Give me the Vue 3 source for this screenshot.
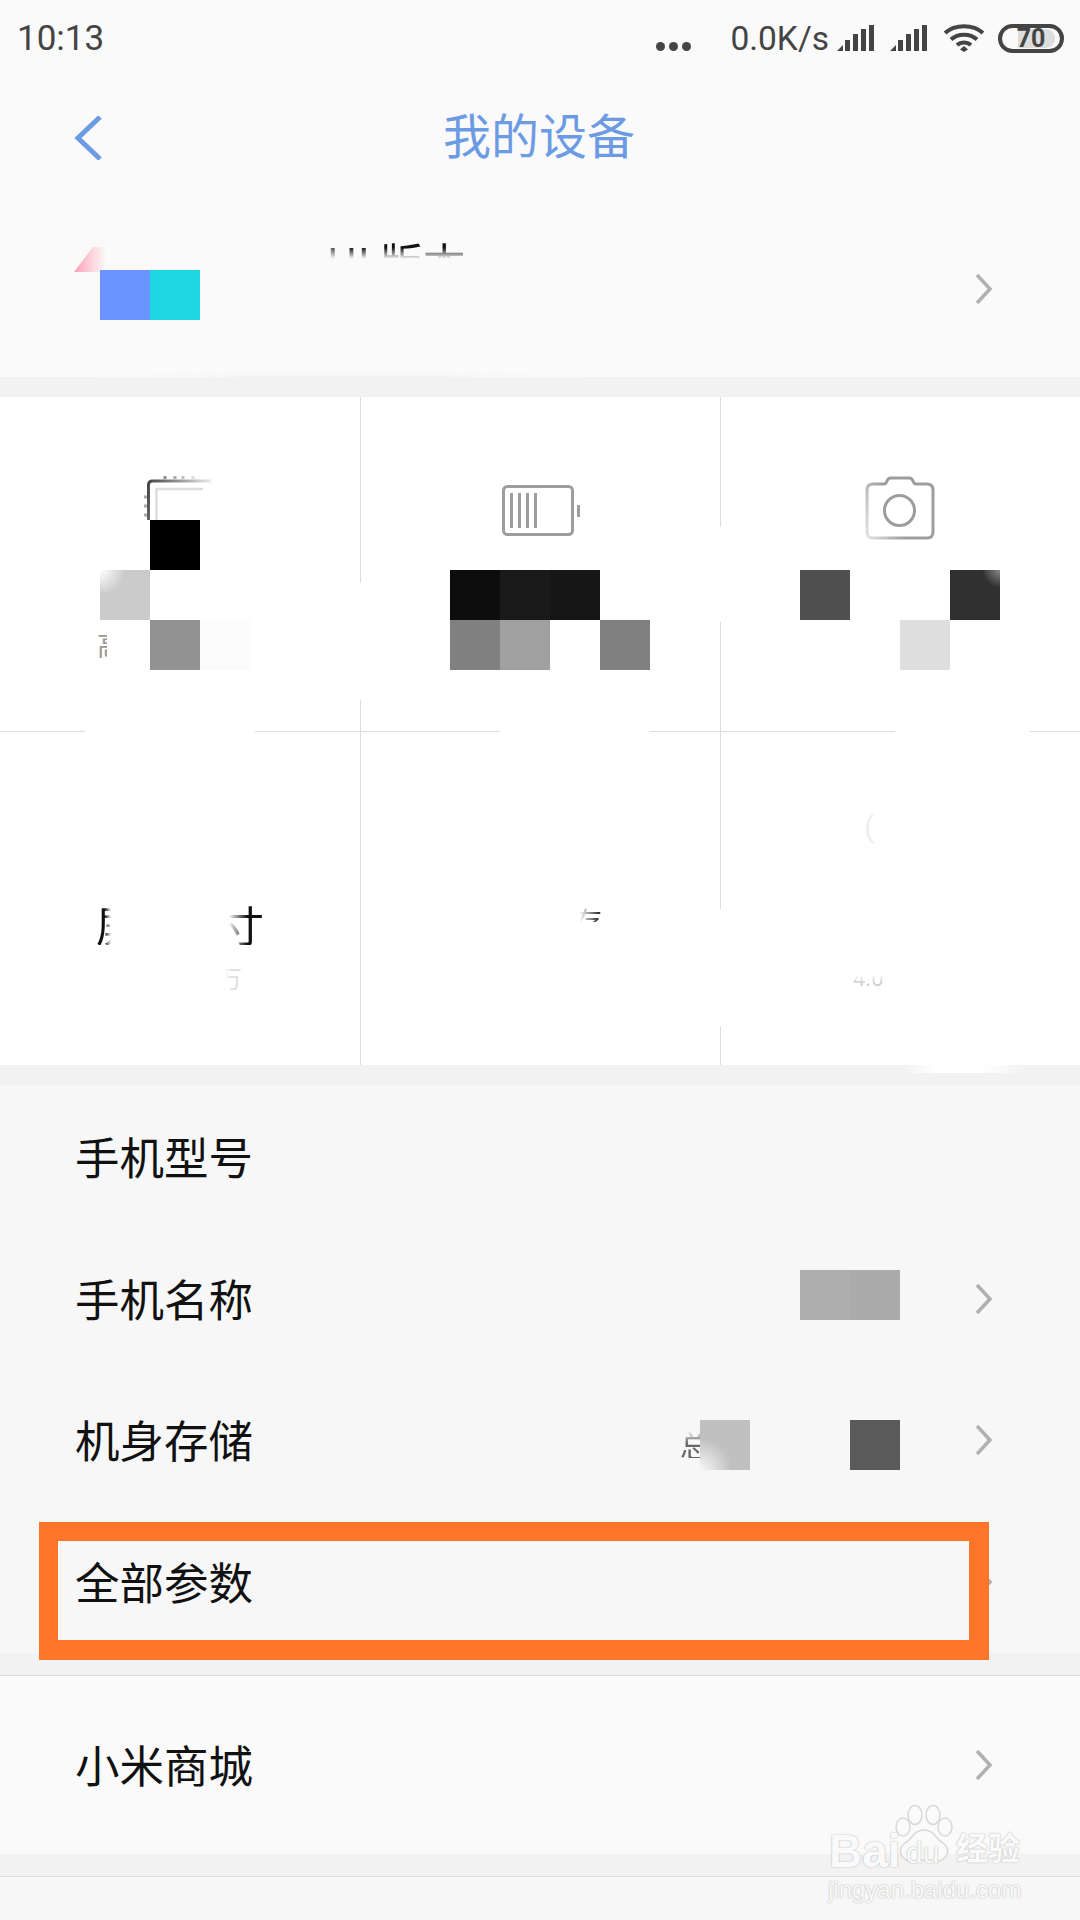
<template>
  <div class="page">
    <section class="top">
      <div class="status">
        <span class="clock">10:13</span>
        <div class="status-right">
          <div class="dots"><i></i><i></i><i></i></div>
          <span class="speed">0.0K/s</span>
          <svg v-for="n in 2" :key="n" class="signal" viewBox="0 0 38 26">
            <path d="M0 26 L6 20 V26 Z" />
            <rect x="8" y="15" width="5" height="11" />
            <rect x="16" y="9" width="5" height="17" />
            <rect x="24" y="4" width="5" height="22" />
            <rect x="32" y="0" width="5" height="26" />
          </svg>
          <svg class="wifi" viewBox="0 0 42 28" fill="none" stroke="#444" stroke-width="4">
            <path d="M2 9 C12 0 30 0 40 9" />
            <path d="M8 15.500 C15 9 27 9 34 15.500" />
            <path d="M14 21 C18 17.500 24 17.500 28 21" />
            <path d="M21 22 L25 25.500 L21 28 L17 25.500 Z" fill="#444" stroke="none" />
          </svg>
          <div class="battery"><div class="battery-fill"></div><b>70</b></div>
        </div>
      </div>
      <div class="nav">
        <svg class="back" viewBox="0 0 28 44" fill="none" stroke="#6d9be3" stroke-width="5">
          <path d="M26 1 L4 22 L26 43" />
        </svg>
        <h1>我的设备</h1>
      </div>
      <div class="version">
        <div class="version-logo"></div>
        <span class="version-name">IUI 版本</span>
        <svg class="chevron" viewBox="0 0 18 30"><path d="M2 1 L15 15 L2 29" /></svg>
      </div>
    </section>
    <div class="band"></div>

    <section class="grid">
      <div v-for="cell in cells" :key="cell.id" class="cell">
        <svg v-if="cell.id === 'cpu'" class="ic-cpu" viewBox="0 0 70 46" fill="none">
          <defs>
            <linearGradient id="cpuFade" gradientUnits="userSpaceOnUse" x1="4" y1="10" x2="68" y2="30">
              <stop offset="0" stop-color="#444" />
              <stop offset="1" stop-color="#fff" />
            </linearGradient>
            <linearGradient id="cpuTicks" gradientUnits="userSpaceOnUse" x1="20" y1="0" x2="56" y2="0">
              <stop offset="0" stop-color="#888" />
              <stop offset="1" stop-color="#eee" />
            </linearGradient>
          </defs>
          <path d="M5.500 46 V11 Q5.500 7 9.500 7 H68" stroke="url(#cpuFade)" stroke-width="3" />
          <path d="M13.500 46 V15 H60" stroke="#ddd" stroke-width="2.500" />
          <path d="M1 23 H4 M1 32 H4 M1 41 H4" stroke="#aaa" stroke-width="3" />
          <path d="M22 2 V5 M32 2 V5 M40 2 V5 M50 2 V5" stroke="url(#cpuTicks)" stroke-width="3" />
        </svg>
        <svg v-if="cell.id === 'battery'" class="ic-battery" viewBox="0 0 78 52" fill="none" stroke="#9d9d9d">
          <rect x="1.500" y="1.500" width="69" height="48" rx="4" stroke-width="3" />
          <path d="M76.500 20 V32" stroke-width="3" />
          <path d="M9.500 8 V43 M17.500 8 V43 M25.500 8 V43 M33.500 8 V43" stroke-width="3" />
        </svg>
        <svg v-if="cell.id === 'camera'" class="ic-camera" viewBox="0 0 70 64" fill="none" stroke="url(#camFade)" stroke-width="3">
          <defs>
            <linearGradient id="camFade" x1="0" y1="1" x2="0.5" y2="0.8">
              <stop offset="0" stop-color="#e4e4e4" />
              <stop offset="1" stop-color="#9d9d9d" />
            </linearGradient>
          </defs>
          <path d="M8 8 H19 Q21 8 22 5 Q23 2 26 2 H44 Q47 2 48 5 Q49 8 51 8 H62 Q68 8 68 14 V56 Q68 62 62 62 H8 Q2 62 2 56 V14 Q2 8 8 8 Z" />
          <circle cx="34.500" cy="34.500" r="15" stroke="#9d9d9d" />
        </svg>
      </div>
    </section>
    <div class="band"></div>

    <section class="specs">
      <div v-for="row in specRows" :key="row.label" class="row">
        <span>{{ row.label }}</span>
        <svg v-if="row.arrow" class="chevron" viewBox="0 0 18 30"><path d="M2 1 L15 15 L2 29" /></svg>
      </div>
    </section>
    <div class="band band-line"></div>

    <section class="shop">
      <div class="row">
        <span>小米商城</span>
        <svg class="chevron" viewBox="0 0 18 30"><path d="M2 1 L15 15 L2 29" /></svg>
      </div>
    </section>
    <div class="band band-line"></div>

    <!-- mosaic blocks sit over the page on a 50px raster -->
    <div
      v-for="(b, i) in blocks"
      :key="i"
      class="block"
      :style="{ left: b[0] + 'px', top: b[1] + 'px', background: b[2] }"
    ></div>

    <!-- smeared parts of the divider lines -->
    <div
      v-for="(e, i) in erased"
      :key="'e' + i"
      class="erase"
      :style="{ left: e[0] + 'px', top: e[1] + 'px', width: e[2] + 'px', height: e[3] + 'px' }"
    ></div>

    <div class="stripe"></div>
    <div class="stripe-low"></div>
    <div class="frag frag-size">屏幕尺寸</div>
    <div class="frag frag-gao">高</div>
    <div class="frag frag-wan">万</div>
    <div class="frag frag-mid">存</div>
    <div class="frag frag-paren">(</div>
    <div class="frag frag-num">4.0</div>
    <div class="frag frag-total">总</div>

    <div class="highlight"></div>

    <div class="watermark">
      <span class="wm-bai">Bai</span>
      <svg class="wm-paw" viewBox="0 0 58 58" fill="#fafafa" stroke="#d8d8d8" stroke-width="1.500">
        <ellipse cx="8" cy="22" rx="7" ry="9" />
        <ellipse cx="20" cy="10" rx="7" ry="9.500" />
        <ellipse cx="38" cy="10" rx="7" ry="9.500" />
        <ellipse cx="50" cy="22" rx="7" ry="9" />
        <path d="M29 25 C40 25 40 34 48 38 C58 46 50 57 40 56 C34 55 24 55 18 56 C8 57 0 46 10 38 C18 34 18 25 29 25 Z" />
      </svg>
      <span class="wm-du">du</span>
      <span class="wm-jy">经验</span>
      <span class="wm-url">jingyan.baidu.com</span>
    </div>
  </div>
</template>

<script setup>
const cells = [
  { id: 'cpu' },
  { id: 'battery' },
  { id: 'camera' },
  { id: 'size' },
  { id: 'res' },
  { id: 'ram' }
]

const specRows = [
  { label: '手机型号', arrow: false },
  { label: '手机名称', arrow: true },
  { label: '机身存储', arrow: true },
  { label: '全部参数', arrow: true }
]

const blocks = [
  [100, 270, '#6b93ff'],
  [150, 270, '#1fd7e3'],
  [150, 520, '#000000'],
  [100, 570, 'radial-gradient(circle at 0 0, #fff 0, #cbcbcb 35%)'],
  [150, 620, '#929292'],
  [200, 620, '#fbfbfb'],
  [450, 570, '#0d0d0d'],
  [500, 570, '#1a1a1a'],
  [550, 570, '#161616'],
  [450, 620, '#808080'],
  [500, 620, '#a0a0a0'],
  [600, 620, '#808080'],
  [800, 570, '#505050'],
  [950, 570, 'radial-gradient(circle at 100% 0, #888 0, #303030 25%)'],
  [900, 620, '#dedede'],
  [800, 1270, '#aeaeae'],
  [850, 1270, '#ababab'],
  [700, 1420, 'radial-gradient(circle at 0 100%, #f7f7f7 0, #c0c0c0 45%)'],
  [850, 1420, '#5a5a5a']
]

const erased = [
  [85, 731, 170, 1],
  [500, 731, 150, 1],
  [895, 731, 135, 1],
  [360, 583, 1, 117],
  [720, 527, 1, 95],
  [720, 909, 1, 117]
]
</script>

<style>
html, body {
  margin: 0;
  background: #f7f7f7;
}
</style>

<style scoped>
.page {
  position: relative;
  width: 1080px;
  height: 1920px;
  overflow: hidden;
  background: #f7f7f7;
  font-family: "Noto Sans CJK SC", "Noto Sans", sans-serif;
  color: #111;
}

.top {
  height: 377px;
  background: #fafafa;
  display: flex;
  flex-direction: column;
}

.status {
  height: 76px;
  padding: 0 16px 0 17px;
  display: flex;
  justify-content: space-between;
  align-items: center;
  color: #444;
  font-family: Roboto, sans-serif;
}

.clock {
  font-size: 35px;
}

.status-right {
  display: flex;
  align-items: center;
}

.dots {
  display: flex;
  gap: 4px;
  margin-right: 39px;
  margin-top: 16px;
}

.dots i {
  width: 9px;
  height: 9px;
  border-radius: 50%;
  background: #444;
}

.speed {
  font-size: 33.500px;
  margin-right: 8px;
}

.signal {
  width: 38px;
  height: 26px;
  margin-right: 15px;
  fill: #444;
}

.wifi {
  width: 42px;
  height: 28px;
  margin-right: 13px;
}

.battery {
  position: relative;
  width: 66px;
  height: 29px;
  box-sizing: border-box;
  border: 4px solid #444;
  border-radius: 15px;
  display: flex;
  align-items: center;
  justify-content: center;
  font-family: Roboto, sans-serif;
  font-size: 25px;
}

.battery b {
  position: relative;
  font-weight: 700;
  line-height: 1;
}

.battery-fill {
  position: absolute;
  left: 16px;
  top: 1px;
  bottom: 1px;
  right: 5px;
  border-radius: 0 9px 9px 0;
  background: #ddd;
}

.nav {
  height: 124px;
  padding-left: 74px;
  position: relative;
  display: flex;
  align-items: center;
}

.back {
  width: 28px;
  height: 44px;
}

.nav h1 {
  position: absolute;
  left: 0;
  right: 2px;
  margin: 0 0 10px;
  text-align: center;
  font-size: 48px;
  font-weight: 400;
  color: #6d9be3;
  line-height: 1;
}

.version {
  flex: 1;
  position: relative;
  display: flex;
  align-items: center;
  justify-content: flex-end;
  padding-right: 87px;
}

.version-logo {
  position: absolute;
  left: 74px;
  top: 47px;
  width: 46px;
  height: 25px;
  background: linear-gradient(to right, #fb9fb5 0, #fdd3dc 38%, #fafafa 70%);
  clip-path: polygon(0 100%, 41% 0, 100% 0, 56% 100%);
}

.version-name {
  position: absolute;
  left: 314px;
  top: 33px;
  font-size: 43px;
  line-height: 56px;
  height: 56px;
  color: #111;
  -webkit-mask-image: linear-gradient(to bottom, #000 0, #000 26%, transparent 46%), linear-gradient(to right, transparent 0, transparent 5%, #000 15%);
  -webkit-mask-composite: source-in;
  mask-image: linear-gradient(to bottom, #000 0, #000 26%, transparent 46%), linear-gradient(to right, transparent 0, transparent 5%, #000 15%);
  mask-composite: intersect;
}

.chevron {
  width: 18px;
  height: 30px;
  fill: none;
  stroke: #b0b0b0;
  stroke-width: 3.500;
}

.band {
  height: 20px;
  background: #f2f2f2;
}

.band-line {
  height: 23px;
  box-sizing: border-box;
  border-bottom: 1px solid #dcdcdc;
}

.grid {
  height: 668px;
  background: #fff;
  display: grid;
  grid-template-columns: 361px 360px 359px;
  grid-template-rows: 335px 333px;
}

.cell {
  position: relative;
  box-sizing: border-box;
  border-right: 1px solid #ddd;
  border-bottom: 1px solid #ddd;
}

.cell:nth-child(3n) {
  border-right: 0;
}

.cell:nth-child(n + 4) {
  border-bottom: 0;
}

.ic-cpu {
  position: absolute;
  left: 143px;
  top: 77px;
  width: 70px;
  height: 46px;
}

.ic-battery {
  position: absolute;
  left: 141px;
  top: 88px;
  width: 78px;
  height: 52px;
}

.ic-camera {
  position: absolute;
  left: 144px;
  top: 79px;
  width: 70px;
  height: 64px;
}

.specs {
  height: 568px;
  background: #f7f7f7;
}

.specs .row {
  height: 141.500px;
}

.specs .chevron {
  margin-top: 3px;
}

.row {
  box-sizing: border-box;
  padding: 0 87px 0 75px;
  display: flex;
  justify-content: space-between;
  align-items: center;
  font-size: 44.500px;
  color: #111;
}

.shop {
  height: 178px;
  background: #fafafa;
}

.shop .row {
  height: 178px;
  padding-bottom: 4px;
}

.shop .chevron {
  margin-top: 4px;
}

.block {
  position: absolute;
  width: 50px;
  height: 50px;
}

.erase {
  position: absolute;
  background: #fff;
}

.stripe {
  position: absolute;
  left: 90px;
  top: 370px;
  width: 500px;
  height: 7px;
  background: linear-gradient(to bottom, #fafafa, #f5f5f5);
  -webkit-mask-image: linear-gradient(to right, transparent, #000 30%, #000 70%, transparent);
  mask-image: linear-gradient(to right, transparent, #000 30%, #000 70%, transparent);
}

.stripe-low {
  position: absolute;
  left: 900px;
  top: 1065px;
  width: 130px;
  height: 8px;
  background: #fff;
  -webkit-mask-image: linear-gradient(to right, transparent, #000 30%, #000 60%, transparent);
  mask-image: linear-gradient(to right, transparent, #000 30%, #000 60%, transparent);
}

.frag {
  position: absolute;
  white-space: nowrap;
  line-height: 1;
}

.frag-size {
  left: 96px;
  top: 903px;
  font-size: 42px;
  color: #111;
  -webkit-mask-image: linear-gradient(to right, #777 0, #999 5%, transparent 9%, transparent 79%, #000 90%);
  mask-image: linear-gradient(to right, #777 0, #999 5%, transparent 9%, transparent 79%, #000 90%);
}

.frag-gao {
  left: 97px;
  top: 630px;
  font-size: 28px;
  color: #999;
  width: 10px;
  overflow: hidden;
}

.frag-wan {
  left: 218px;
  top: 966px;
  font-size: 24px;
  color: #ddd;
  -webkit-mask-image: linear-gradient(to right, transparent 30%, #000 55%);
  mask-image: linear-gradient(to right, transparent 30%, #000 55%);
}

.frag-mid {
  left: 574px;
  top: 907px;
  font-size: 28px;
  color: #333;
  width: 27px;
  height: 15px;
  overflow: hidden;
  -webkit-mask-image: linear-gradient(to right, transparent 20%, #000 90%);
  mask-image: linear-gradient(to right, transparent 20%, #000 90%);
}

.frag-paren {
  left: 864px;
  top: 812px;
  font-size: 30px;
  color: #eee;
  font-family: Roboto, sans-serif;
}

.frag-num {
  left: 853px;
  top: 968px;
  font-size: 22px;
  color: #ccc;
  font-family: Roboto, sans-serif;
  -webkit-mask-image: linear-gradient(to bottom, transparent 30%, #000 70%);
  mask-image: linear-gradient(to bottom, transparent 30%, #000 70%);
}

.frag-total {
  left: 680px;
  top: 1428px;
  font-size: 30px;
  color: #666;
  width: 20px;
  overflow: hidden;
  -webkit-mask-image: linear-gradient(to bottom, transparent 10%, #000 50%);
  mask-image: linear-gradient(to bottom, transparent 10%, #000 50%);
}

.highlight {
  position: absolute;
  left: 39px;
  top: 1522px;
  width: 950px;
  height: 138px;
  box-sizing: border-box;
  border: solid #ff752a;
  border-width: 19px 20px 20px 19px;
}

.watermark {
  position: absolute;
  left: 828px;
  top: 1805px;
  width: 200px;
  height: 95px;
  color: #fafafa;
  font-family: "Liberation Sans", sans-serif;
  text-shadow: 0 0 1px #b8b8b8, 0 0 2px #c8c8c8;
}

.watermark span {
  position: absolute;
  line-height: 1;
  white-space: nowrap;
}

.wm-bai {
  left: 1px;
  top: 23px;
  font-size: 46px;
  font-weight: 700;
}

.wm-paw {
  position: absolute;
  left: 67px;
  top: 0;
  width: 58px;
  height: 58px;
}

.wm-du {
  left: 78px;
  top: 33px;
  font-size: 30px;
}

.wm-jy {
  left: 128px;
  top: 25px;
  font-size: 32px;
  font-weight: 700;
  font-family: "Noto Sans CJK SC", sans-serif;
}

.wm-url {
  left: 0;
  top: 73px;
  font-size: 24px;
}
</style>
